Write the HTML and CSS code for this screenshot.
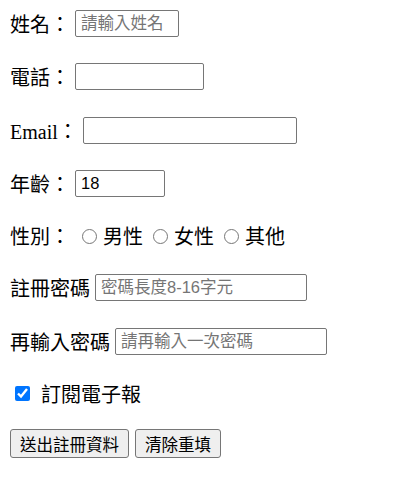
FILE: index.html
```html
<!DOCTYPE html>
<html lang="zh-Hant">
<head>
<meta charset="utf-8">
<title>註冊表單</title>
<link rel="stylesheet" href="styles.css">
</head>
<body>
<form class="form">
  <div class="row">
    <label class="lbl" for="name">姓名：</label>
    <input class="field w-name" id="name" type="text" placeholder="請輸入姓名">
  </div>
  <div class="row">
    <label class="lbl" for="tel">電話：</label>
    <input class="field w-tel" id="tel" type="text">
  </div>
  <div class="row">
    <label class="lbl" for="email">Email：</label>
    <input class="field w-email" id="email" type="text">
  </div>
  <div class="row">
    <label class="lbl" for="age">年齡：</label>
    <input class="field w-age" id="age" type="text" value="18">
  </div>
  <div class="row short">
    <span class="lbl">性別：</span>
    <input class="radio first" type="radio" name="g" id="g1"><label class="opt" for="g1">男性</label>
    <input class="radio" type="radio" name="g" id="g2"><label class="opt" for="g2">女性</label>
    <input class="radio" type="radio" name="g" id="g3"><label class="opt" for="g3">其他</label>
  </div>
  <div class="row">
    <label class="lbl" for="pw">註冊密碼</label>
    <input class="field w-pw" id="pw" type="password" placeholder="密碼長度8-16字元">
  </div>
  <div class="row">
    <label class="lbl" for="pw2">再輸入密碼</label>
    <input class="field w-pw" id="pw2" type="password" placeholder="請再輸入一次密碼">
  </div>
  <div class="row short">
    <input class="check" type="checkbox" id="sub" checked>
    <label class="opt sub" for="sub">訂閱電子報</label>
  </div>
  <div class="row buttons">
    <button class="btn" type="submit">送出註冊資料</button>
    <button class="btn" type="reset">清除重填</button>
  </div>
</form>
</body>
</html>
```
FILE: styles.css
```css
html, body {
  margin: 0;
  padding: 0;
  background: #ffffff;
}

body {
  padding: 10px 10px 0 10px;
  font-family: "Liberation Serif", "Noto Sans CJK TC", serif;
  font-size: 20px;
  color: #000000;
}

.form {
  display: flex;
  flex-direction: column;
  gap: 26.3px;
}

.row {
  display: flex;
  align-items: center;
  height: 27px;
}

.row.short {
  height: 25px;
}

.lbl {
  white-space: nowrap;
  margin-right: 5px;
}

.field {
  box-sizing: border-box;
  height: 27px;
  margin: 0;
  padding: 1px 5px;
  border: 1px solid #767676;
  border-radius: 2px;
  background: #ffffff;
  font-family: "Liberation Sans", "Noto Sans CJK TC", sans-serif;
  font-size: 16.5px;
  color: #000000;
  outline: none;
}

.field::placeholder {
  color: #757575;
  opacity: 1;
}

.w-name { width: 104px; }
.w-tel { width: 129px; }
.w-email { width: 214px; }
.w-age { width: 90px; }
.w-pw { width: 212px; }

.radio {
  width: 15px;
  height: 15px;
  margin: 1px 6px 0 10px;
  accent-color: #767676;
}

.radio.first {
  margin-left: 7px;
}

.opt {
  white-space: nowrap;
  font-family: "Noto Sans CJK TC", sans-serif;
}

.check {
  width: 15px;
  height: 15px;
  margin: 0 11px 0 5px;
  accent-color: #0075ff;
}

.buttons {
  height: 29px;
  gap: 6px;
  margin-top: -3px;
}

.btn {
  box-sizing: border-box;
  height: 29px;
  margin: 0;
  padding: 0 9px;
  border: 1px solid #767676;
  border-radius: 3px;
  background: #efefef;
  font-family: "Noto Sans CJK TC", sans-serif;
  font-size: 16.5px;
  line-height: 1;
  color: #000000;
}
```
